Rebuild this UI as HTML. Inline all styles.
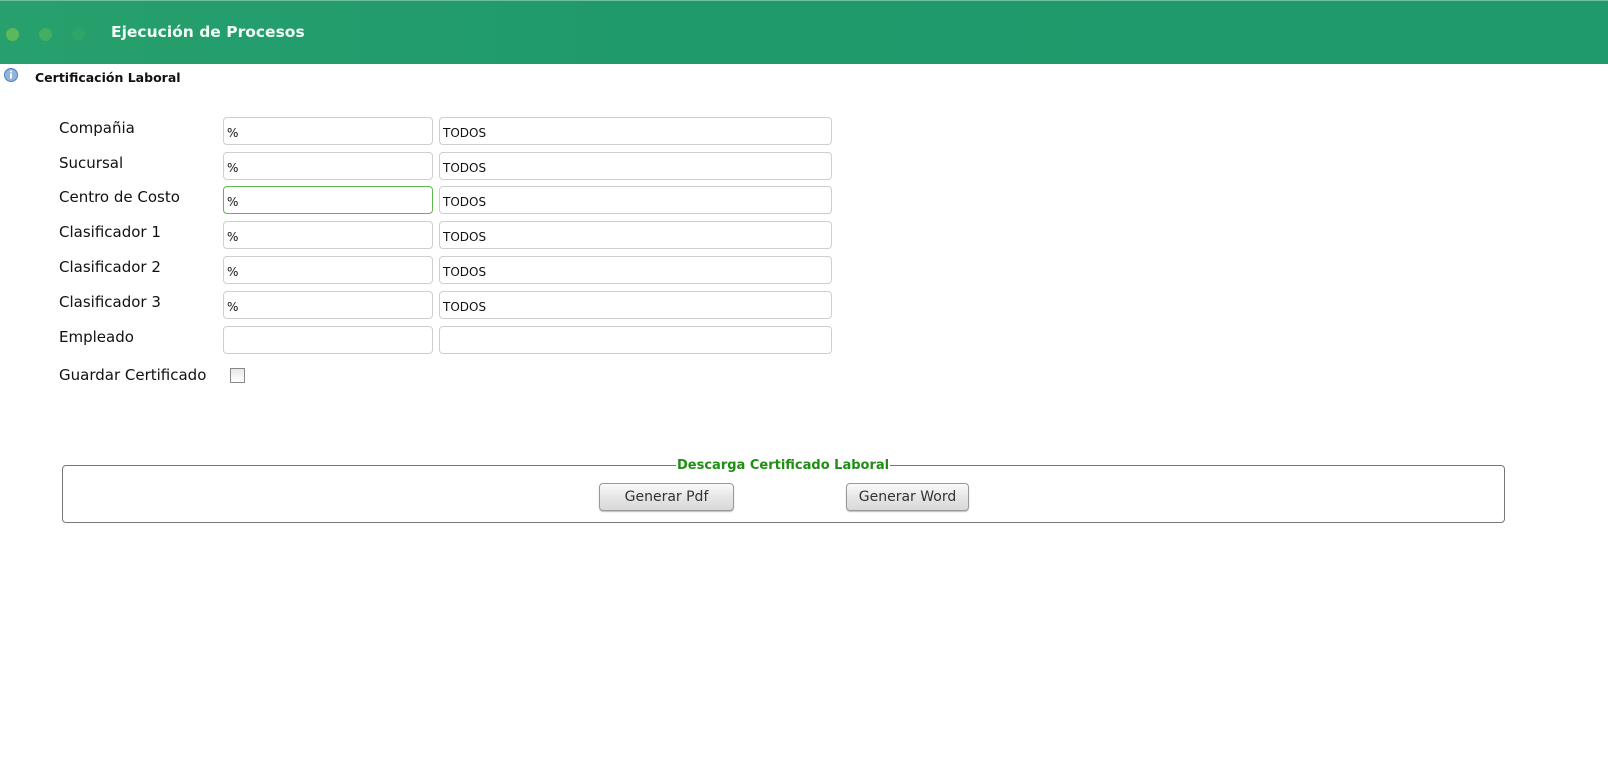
<!DOCTYPE html>
<html><head><meta charset="utf-8"><style>
*{box-sizing:border-box;margin:0;padding:0}
body{width:1608px;height:769px;background:#fff;position:relative;overflow:hidden;font-family:"DejaVu Sans","Liberation Sans",sans-serif}
.hdr{position:absolute;left:0;top:0;width:1608px;height:64px;background:linear-gradient(90deg,#27a06d 0%,#1f9a6b 40%,#1e9a6c 100%);border-top:1px solid #6fbf9a}
.dot{position:absolute;top:27px;width:13px;height:13px;border-radius:50%}
.title{position:absolute;left:111px;top:22px;color:#f2fff6;font-weight:bold;font-size:15.5px}
.sub{position:absolute;left:35px;top:70px;font-size:12.5px;font-weight:bold;color:#111}
.lbl{position:absolute;left:59px;font-size:15px;color:#111}
.in{position:absolute;height:28px;border:1px solid #cfcfcf;border-radius:4px;font-size:12px;color:#111;padding:8px 0 0 3px;background:#fff}
.a{left:223px;width:210px}.b{left:439px;width:393px}
.fs{position:absolute;left:62px;top:465px;width:1443px;height:58px;border:1px solid #777;border-radius:4px}
.leg{position:absolute;left:676px;top:458px;background:#fff;padding:0 1px;color:#1e8f12;font-weight:bold;font-size:13px}
.btn{position:absolute;top:483px;height:28px;border:1px solid #9a9a9a;border-radius:4px;background:linear-gradient(#fafafa,#e6e6e6 50%,#d8d8d8);font-size:14px;color:#333;text-align:center;line-height:26px;box-shadow:0 1px 1px #bbb}
</style></head><body>
<div class="hdr">
<div class="dot" style="left:6px;background:#5cb85a"></div>
<div class="dot" style="left:39px;background:#43ad62"></div>
<div class="dot" style="left:72px;background:#2ea468"></div>
<div class="title">Ejecución de Procesos</div>
</div>
<svg style="position:absolute;left:3px;top:67px" width="16" height="16" viewBox="0 0 16 16"><circle cx="8" cy="8" r="6.5" fill="#8fb4dd" stroke="#4f7fb8"/><rect x="7" y="6.5" width="2" height="5" fill="#fff"/><circle cx="8" cy="4.5" r="1.1" fill="#fff"/></svg>
<div class="sub">Certificación Laboral</div>

<div class="lbl" style="top:119px">Compañia</div>
<div class="in a" style="top:117px">%</div><div class="in b" style="top:117px">TODOS</div>
<div class="lbl" style="top:154px">Sucursal</div>
<div class="in a" style="top:152px">%</div><div class="in b" style="top:152px">TODOS</div>
<div class="lbl" style="top:188px">Centro de Costo</div>
<div class="in a" style="top:186px;border-color:#5cb84a">%</div><div class="in b" style="top:186px">TODOS</div>
<div class="lbl" style="top:223px">Clasificador 1</div>
<div class="in a" style="top:221px">%</div><div class="in b" style="top:221px">TODOS</div>
<div class="lbl" style="top:258px">Clasificador 2</div>
<div class="in a" style="top:256px">%</div><div class="in b" style="top:256px">TODOS</div>
<div class="lbl" style="top:293px">Clasificador 3</div>
<div class="in a" style="top:291px">%</div><div class="in b" style="top:291px">TODOS</div>
<div class="lbl" style="top:328px">Empleado</div>
<div class="in a" style="top:326px"></div><div class="in b" style="top:326px"></div>
<div class="lbl" style="top:366px">Guardar Certificado</div>
<div style="position:absolute;left:230px;top:368px;width:15px;height:15px;border:1px solid #888;background:linear-gradient(#e8e8e8,#fff)"></div>

<div class="fs"></div>
<div class="leg">Descarga Certificado Laboral</div>
<div class="btn" style="left:599px;width:135px">Generar Pdf</div>
<div class="btn" style="left:846px;width:123px">Generar Word</div>
</body></html>
